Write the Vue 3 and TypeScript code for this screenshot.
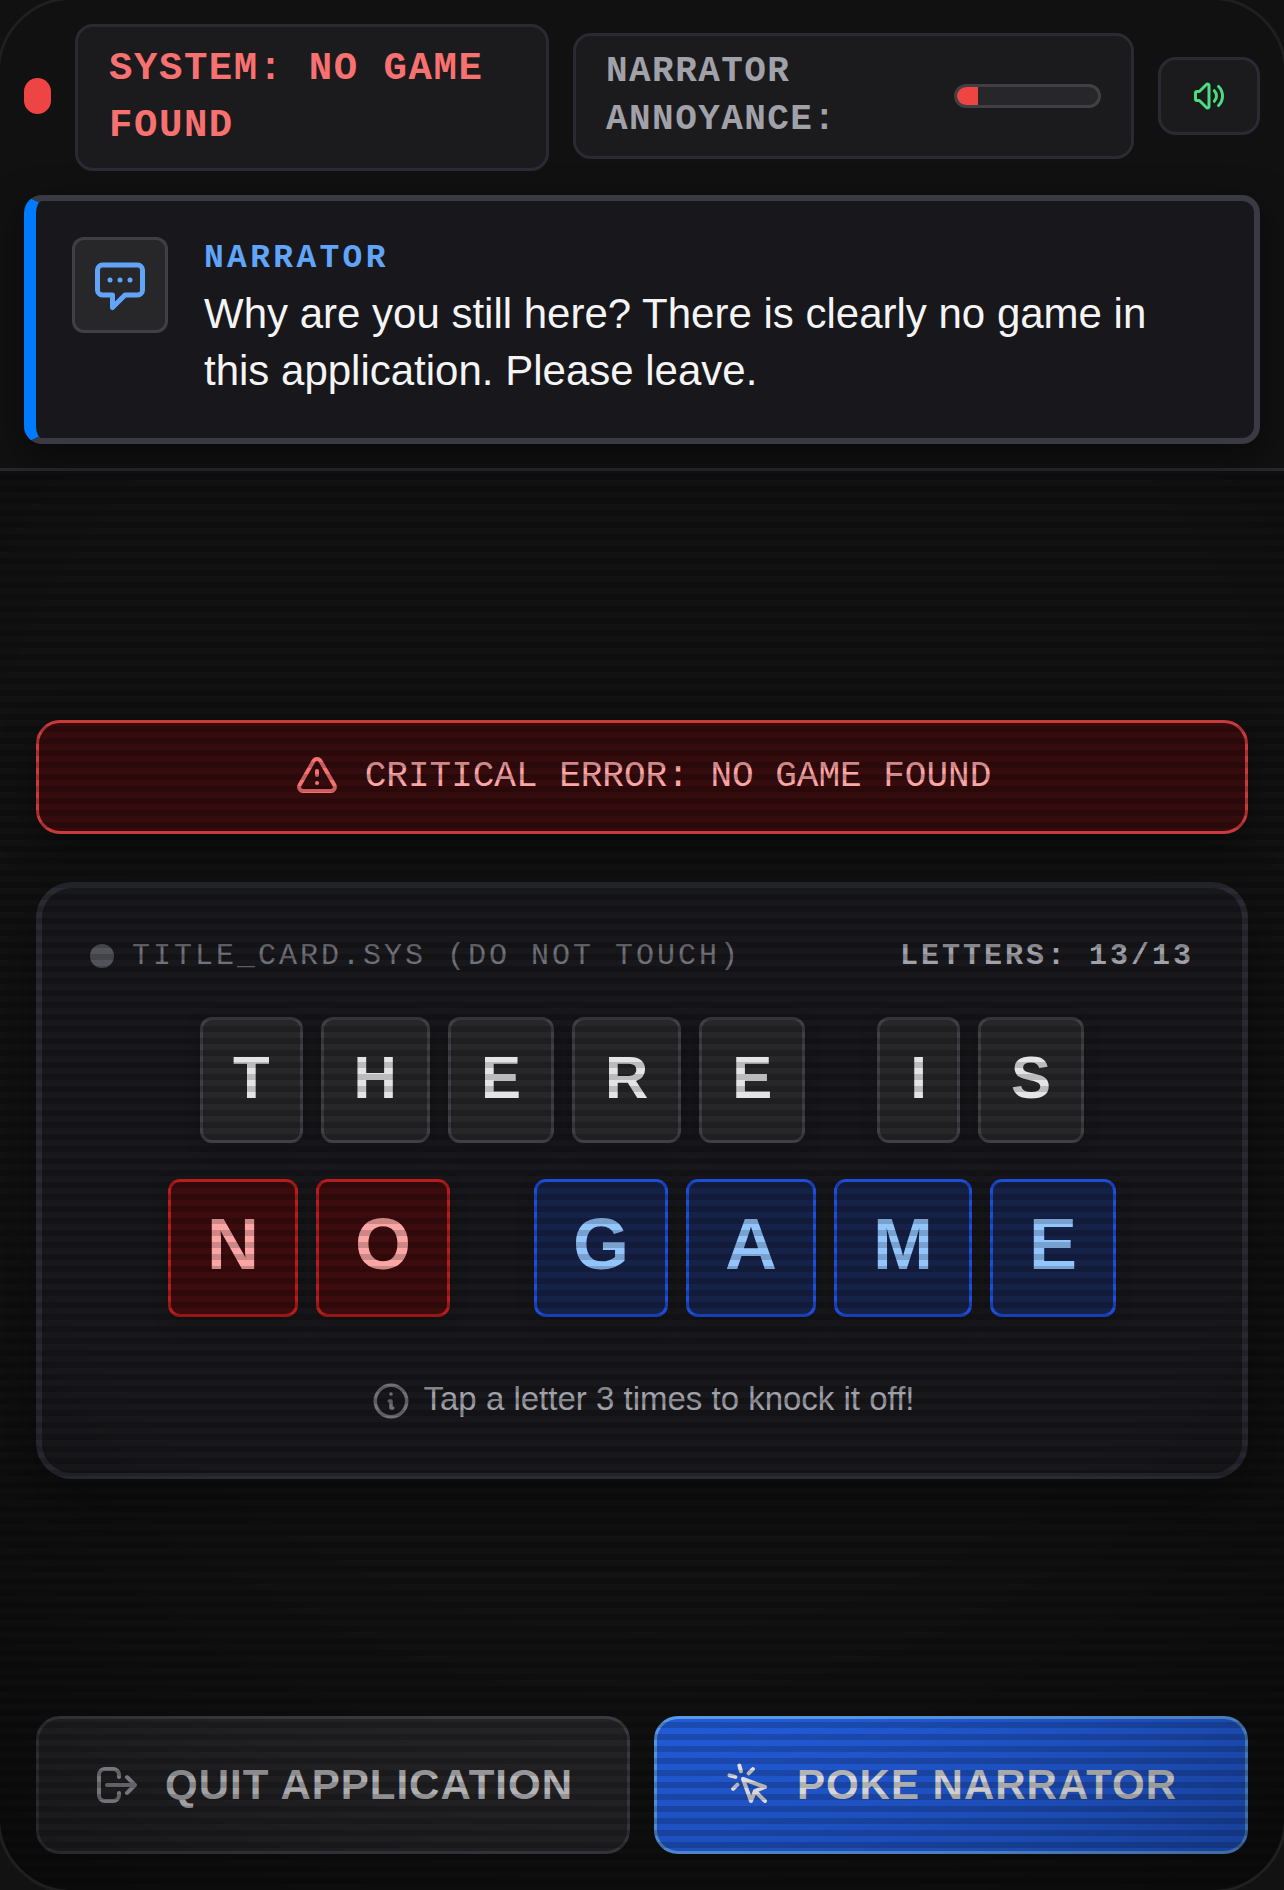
<script setup lang="ts">
import { computed, ref } from 'vue'

interface Tile {
  letter: string
  taps: number
}

type Tone = 'plain' | 'danger' | 'accent'

interface Word {
  tone: Tone
  tiles: Tile[]
}

const makeWord = (text: string, tone: Tone): Word => ({
  tone,
  tiles: text.split('').map((letter) => ({ letter, taps: 0 })),
})

const TAPS_TO_DROP = 3
const smallRow = ref<Word[]>([makeWord('THERE', 'plain'), makeWord('IS', 'plain')])
const largeRow = ref<Word[]>([makeWord('NO', 'danger'), makeWord('GAME', 'accent')])

const allTiles = computed(() => [...smallRow.value, ...largeRow.value].flatMap((w) => w.tiles))
const total = computed(() => allTiles.value.length)
const remaining = computed(() => allTiles.value.filter((t) => t.taps < TAPS_TO_DROP).length)

const annoyance = ref(15)
const soundOn = ref(true)

function tap(tile: Tile): void {
  tile.taps += 1
}

function poke(): void {
  annoyance.value = Math.min(100, annoyance.value + 5)
}
</script>

<template>
  <div class="app">
    <header class="top">
      <div class="status-row">
        <span class="status-dot"></span>
        <div class="pill system">SYSTEM: NO GAME FOUND</div>
        <div class="pill annoyance">
          <span id="annoyance-label">NARRATOR ANNOYANCE:</span>
          <div
            class="meter"
            role="meter"
            aria-labelledby="annoyance-label"
            aria-valuemin="0"
            aria-valuemax="100"
            :aria-valuenow="annoyance"
          >
            <div class="meter-fill" :style="{ width: annoyance + '%' }"></div>
          </div>
        </div>
        <button
          class="pill sound"
          type="button"
          aria-label="Toggle sound"
          :aria-pressed="soundOn"
          @click="soundOn = !soundOn"
        >
          <svg class="icon icon-s" viewBox="0 0 24 24">
            <path
              d="M15.536 8.464a5 5 0 010 7.072m2.828-9.9a9 9 0 010 12.728M5.586 15H4a1 1 0 01-1-1v-4a1 1 0 011-1h1.586l4.707-4.707C10.923 3.663 12 4.109 12 5v14c0 .891-1.077 1.337-1.707.707L5.586 15z"
            />
          </svg>
        </button>
      </div>

      <section class="narrator">
        <div class="avatar">
          <svg class="icon icon-xl" viewBox="0 0 24 24">
            <path
              d="M8 10h.01M12 10h.01M16 10h.01M9 16H5a2 2 0 01-2-2V6a2 2 0 012-2h14a2 2 0 012 2v8a2 2 0 01-2 2h-5l-5 5v-5z"
            />
          </svg>
        </div>
        <div class="speech">
          <h2>NARRATOR</h2>
          <p>Why are you still here? There is clearly no game in this application. Please leave.</p>
        </div>
      </section>
    </header>

    <main class="stage">
      <div class="alert" role="alert">
        <svg class="icon icon-l" viewBox="0 0 24 24">
          <path
            d="M12 9v2m0 4h.01m-6.938 4h13.856c1.54 0 2.502-1.667 1.732-3L13.732 4c-.77-1.333-2.694-1.333-3.464 0L3.34 16c-.77 1.333.192 3 1.732 3z"
          />
        </svg>
        <span>CRITICAL ERROR: NO GAME FOUND</span>
      </div>

      <section class="card">
        <div class="card-head">
          <span class="card-dot"></span>
          <span class="card-title">TITLE_CARD.SYS (DO NOT TOUCH)</span>
          <span class="card-count">LETTERS: {{ remaining }}/{{ total }}</span>
        </div>

        <div class="row small">
          <div v-for="(word, w) in smallRow" :key="w" class="word" :class="word.tone">
            <button
              v-for="(tile, i) in word.tiles"
              :key="i"
              type="button"
              class="tile"
              :class="{ gone: tile.taps >= TAPS_TO_DROP }"
              @click="tap(tile)"
            >{{ tile.letter }}</button>
          </div>
        </div>

        <div class="row large">
          <div v-for="(word, w) in largeRow" :key="w" class="word" :class="word.tone">
            <button
              v-for="(tile, i) in word.tiles"
              :key="i"
              type="button"
              class="tile"
              :class="{ gone: tile.taps >= TAPS_TO_DROP }"
              @click="tap(tile)"
            >{{ tile.letter }}</button>
          </div>
        </div>

        <p class="hint">
          <svg class="icon icon-m" viewBox="0 0 24 24">
            <path d="M13 16h-1v-4h-1m1-4h.01M21 12a9 9 0 11-18 0 9 9 0 0118 0z" />
          </svg>
          <span>Tap a letter 3 times to knock it off!</span>
        </p>
      </section>
    </main>

    <footer class="actions">
      <button class="action quit" type="button">
        <svg class="icon icon-l" viewBox="0 0 24 24">
          <path
            d="M17 16l4-4m0 0l-4-4m4 4H7m6 4v1a3 3 0 01-3 3H6a3 3 0 01-3-3V7a3 3 0 013-3h4a3 3 0 013 3v1"
          />
        </svg>
        <span>QUIT APPLICATION</span>
      </button>
      <button class="action poke" type="button" @click="poke">
        <svg class="icon icon-l" viewBox="0 0 24 24">
          <path
            d="M15 15l-2 5L9 9l11 4-5 2zm0 0l5 5M7.188 2.239l.777 2.897M5.136 7.965l-2.898-.777M13.95 4.05l-2.122 2.122m-5.657 5.656l-2.12 2.122"
          />
        </svg>
        <span>POKE NARRATOR</span>
      </button>
    </footer>

    <div class="crt"></div>
    <div class="bezel"></div>
  </div>
</template>

<style>
body {
  margin: 0;
  background: #111111;
}
</style>

<style scoped>
* {
  box-sizing: border-box;
}

.app {
  position: relative;
  display: flex;
  flex-direction: column;
  min-height: 100vh;
  overflow: hidden;
  background: #121213;
  color: #f4f4f5;
  font-family: 'Liberation Sans', Arial, sans-serif;
}

h2,
p {
  margin: 0;
}

button {
  margin: 0;
  font-family: inherit;
  cursor: pointer;
}

.icon {
  display: block;
  flex: none;
  fill: none;
  stroke: currentColor;
  stroke-width: 2;
  stroke-linecap: round;
  stroke-linejoin: round;
}

.icon-s {
  width: 36px;
  height: 36px;
}

.icon-m {
  width: 42px;
  height: 42px;
}

.icon-l {
  width: 48px;
  height: 48px;
}

.icon-xl {
  width: 60px;
  height: 60px;
}

/* Header: stays above the scanlines */
.top {
  position: relative;
  z-index: 2;
  padding: 24px;
  background: #111112;
  border-bottom: 3px solid #27272e;
}

.status-row {
  display: grid;
  grid-template-columns: 27px 474fr 561fr 102px;
  align-items: center;
  gap: 24px;
  margin-bottom: 27px;
}

.status-dot {
  height: 36px;
  border-radius: 18px;
  background: #ef4444;
}

.pill {
  border: 3px solid #2a2a32;
  border-radius: 18px;
  background: #1b1b1d;
  font-family: 'Liberation Mono', 'Courier New', monospace;
  font-weight: 700;
  letter-spacing: 0.04em;
}

.system {
  margin-bottom: -3px;
  padding: 14px 31px 13px;
  color: #f87171;
  font-size: 39px;
  line-height: 57px;
}

.annoyance {
  display: flex;
  align-items: center;
  justify-content: space-between;
  gap: 24px;
  padding: 12px 30px;
  color: #a1a1aa;
  font-size: 36px;
  line-height: 48px;
}

.meter {
  flex: none;
  width: 147px;
  height: 24px;
  overflow: hidden;
  border: 3px solid #3f3f46;
  border-radius: 12px;
  background: #27272a;
}

.meter-fill {
  height: 100%;
  background: #ef4444;
}

.sound {
  display: flex;
  align-items: center;
  justify-content: center;
  height: 78px;
  padding: 0;
  color: #4ade80;
}

.narrator {
  display: flex;
  align-items: flex-start;
  gap: 36px;
  padding: 36px 36px 39px;
  border: 6px solid #3a3a45;
  border-left: 12px solid #007bff;
  border-radius: 18px;
  background: #18181c;
  box-shadow: 0 12px 36px rgba(0, 0, 0, 0.5);
}

.avatar {
  display: flex;
  flex: none;
  align-items: center;
  justify-content: center;
  width: 96px;
  height: 96px;
  border: 3px solid #3f3f46;
  border-radius: 12px;
  background: #27272a;
  color: #60a5fa;
}

.speech {
  flex: 1;
}

.speech h2 {
  margin-bottom: 4px;
  color: #60a5fa;
  font-family: 'Liberation Mono', 'Courier New', monospace;
  font-size: 33px;
  font-weight: 700;
  line-height: 44px;
  letter-spacing: 0.1em;
}

.speech p {
  font-size: 42px;
  line-height: 57px;
}

/* Stage */
.stage {
  display: flex;
  flex: 1;
  flex-direction: column;
  justify-content: center;
  gap: 48px;
  padding: 36px 36px 24px;
}

.alert {
  display: flex;
  align-items: center;
  justify-content: center;
  gap: 24px;
  padding: 30px;
  border: 3px solid #cb3a3b;
  border-radius: 24px;
  background: #350c0e;
  box-shadow: 0 12px 36px rgba(0, 0, 0, 0.4);
  color: #f87171;
  font-family: 'Liberation Mono', 'Courier New', monospace;
  font-size: 36px;
  line-height: 48px;
}

.alert span {
  color: #fca5a5;
}

.card {
  padding: 47px 48px 51px;
  border: 6px solid #2a2a33;
  border-radius: 36px;
  background: #18181c;
  box-shadow: 0 24px 60px rgba(0, 0, 0, 0.4);
}

.card-head {
  display: flex;
  align-items: center;
  gap: 18px;
  margin-bottom: 40px;
  font-family: 'Liberation Mono', 'Courier New', monospace;
  font-size: 30px;
  line-height: 42px;
  letter-spacing: 3px;
}

.card-dot {
  width: 24px;
  height: 24px;
  border-radius: 50%;
  background: #52525b;
}

.card-title {
  color: #71717a;
}

.card-count {
  margin-left: auto;
  color: #a1a1aa;
  font-weight: 700;
}

.row {
  display: flex;
  justify-content: center;
}

.small {
  gap: 72px;
  margin-bottom: 36px;
}

.large {
  gap: 84px;
  margin-bottom: 63px;
}

.word {
  display: flex;
  gap: 18px;
}

.tile {
  border: 3px solid #3f3f46;
  border-radius: 12px;
  background: #27272a;
  box-shadow: 0 6px 18px rgba(0, 0, 0, 0.2);
  color: #e4e4e7;
  font-weight: 700;
}

.tile.gone {
  visibility: hidden;
}

.small .tile {
  padding: 0 30px 4px;
  font-size: 60px;
  line-height: 116px;
}

.large .tile {
  padding: 0 36px 8px;
  font-size: 72px;
  line-height: 124px;
}

.danger .tile {
  border-color: #b91c1c;
  background: #3b0b0d;
  color: #fca5a5;
}

.accent .tile {
  border-color: #1d4ed8;
  background: #162147;
  color: #93c5fd;
}

.hint {
  display: flex;
  align-items: flex-start;
  justify-content: center;
  gap: 12px;
  color: #71717a;
  font-size: 33px;
  line-height: 38px;
}

.hint span {
  color: #a1a1aa;
}

/* Bottom actions */
.actions {
  display: grid;
  grid-template-columns: 1fr 1fr;
  gap: 24px;
  padding: 0 36px 36px;
}

.action {
  display: flex;
  align-items: center;
  justify-content: center;
  gap: 24px;
  height: 138px;
  padding: 0 24px;
  border: 3px solid #3f3f46;
  border-radius: 24px;
  font-size: 42px;
  font-weight: 700;
  line-height: 60px;
  letter-spacing: 1px;
}

.quit {
  background: #27272a;
  color: #a1a1aa;
}

.quit span {
  color: #d4d4d8;
}

.poke {
  border-color: #60a5fa;
  background: #2563eb;
  color: #ffffff;
}

/* Scanlines and vignette over the whole screen */
.crt {
  position: absolute;
  inset: 0;
  z-index: 1;
  border-radius: 72px;
  background:
    radial-gradient(circle, transparent 60%, rgba(0, 0, 0, 0.4) 100%),
    repeating-linear-gradient(transparent 0 6px, rgba(0, 0, 0, 0.18) 6px 12px);
  pointer-events: none;
}

.bezel {
  position: absolute;
  inset: -3px;
  z-index: 3;
  border: 3px solid rgba(255, 255, 255, 0.06);
  border-radius: 75px;
  pointer-events: none;
}
</style>
